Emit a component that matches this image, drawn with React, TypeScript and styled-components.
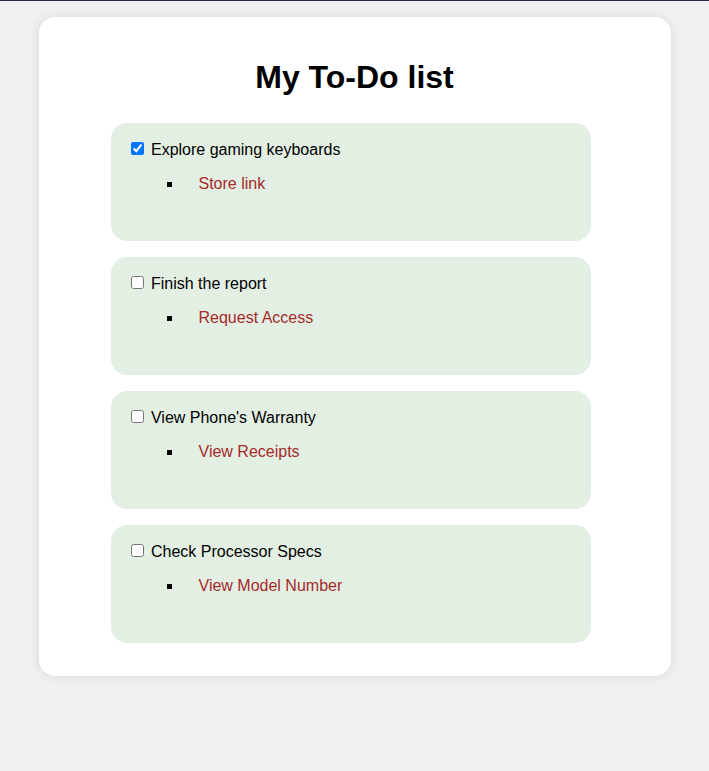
import React, { useState } from 'react'
import styled, { createGlobalStyle } from 'styled-components'

const GlobalStyle = createGlobalStyle`
	html, body {
		margin: 0;
		padding: 0;
		background: #f0f0f0;
		font-family: 'Liberation Sans', Arial, sans-serif;
	}
	body {
		border-top: 1px solid #2d2b42;
		min-height: 100vh;
	}
`

const Card = styled.main`
	width: 632px;
	box-sizing: border-box;
	margin: 16px auto;
	padding: 20px 80px 33px 72px;
	background: #fff;
	border-radius: 16px;
	box-shadow: 0 0 10px rgba(0, 0, 0, 0.1);
`

const Title = styled.h1`
	margin: 22px 0 27px 8px;
	font-size: 32px;
	font-weight: bold;
	text-align: center;
	color: #000;
`

const TodoList = styled.div`
	display: flex;
	flex-direction: column;
	gap: 16px;
`

const Item = styled.section`
	background: #e4efe4;
	border-radius: 16px;
	padding: 16px;
	min-height: 118px;
	box-sizing: border-box;
`

const Label = styled.label`
	font-size: 16px;
	color: #000;
`

const Check = styled.input`
	margin: 3px 3px 3px 4px;
	vertical-align: baseline;
`

const Links = styled.ul`
	list-style: square;
	margin: 8px 0 0;
	padding-left: 56px;
`

const LinkItem = styled.li`
	padding: 8px 16px;
	font-size: 16px;
`

const Link = styled.a`
	color: #a52a2a;
	text-decoration: none;
`

type Todo = { id: number; title: string; link: string; done: boolean }

const initial: Todo[] = [
	{ id: 1, title: 'Explore gaming keyboards', link: 'Store link', done: true },
	{ id: 2, title: 'Finish the report', link: 'Request Access', done: false },
	{ id: 3, title: "View Phone's Warranty", link: 'View Receipts', done: false },
	{ id: 4, title: 'Check Processor Specs', link: 'View Model Number', done: false },
]

const App = (): JSX.Element => {
	const [todos, setTodos] = useState(initial)

	const toggle = (id: number) =>
		setTodos(todos.map((t) => (t.id === id ? { ...t, done: !t.done } : t)))

	return (
		<>
			<GlobalStyle />
			<Card>
				<Title>My To-Do list</Title>
				<TodoList>
					{todos.map((todo) => (
						<Item key={todo.id}>
							<Label>
								<Check type='checkbox' checked={todo.done} onChange={() => toggle(todo.id)} />{' '}
								{todo.title}
							</Label>
							<Links>
								<LinkItem>
									<Link href='#'>{todo.link}</Link>
								</LinkItem>
							</Links>
						</Item>
					))}
				</TodoList>
			</Card>
		</>
	)
}

export default App
